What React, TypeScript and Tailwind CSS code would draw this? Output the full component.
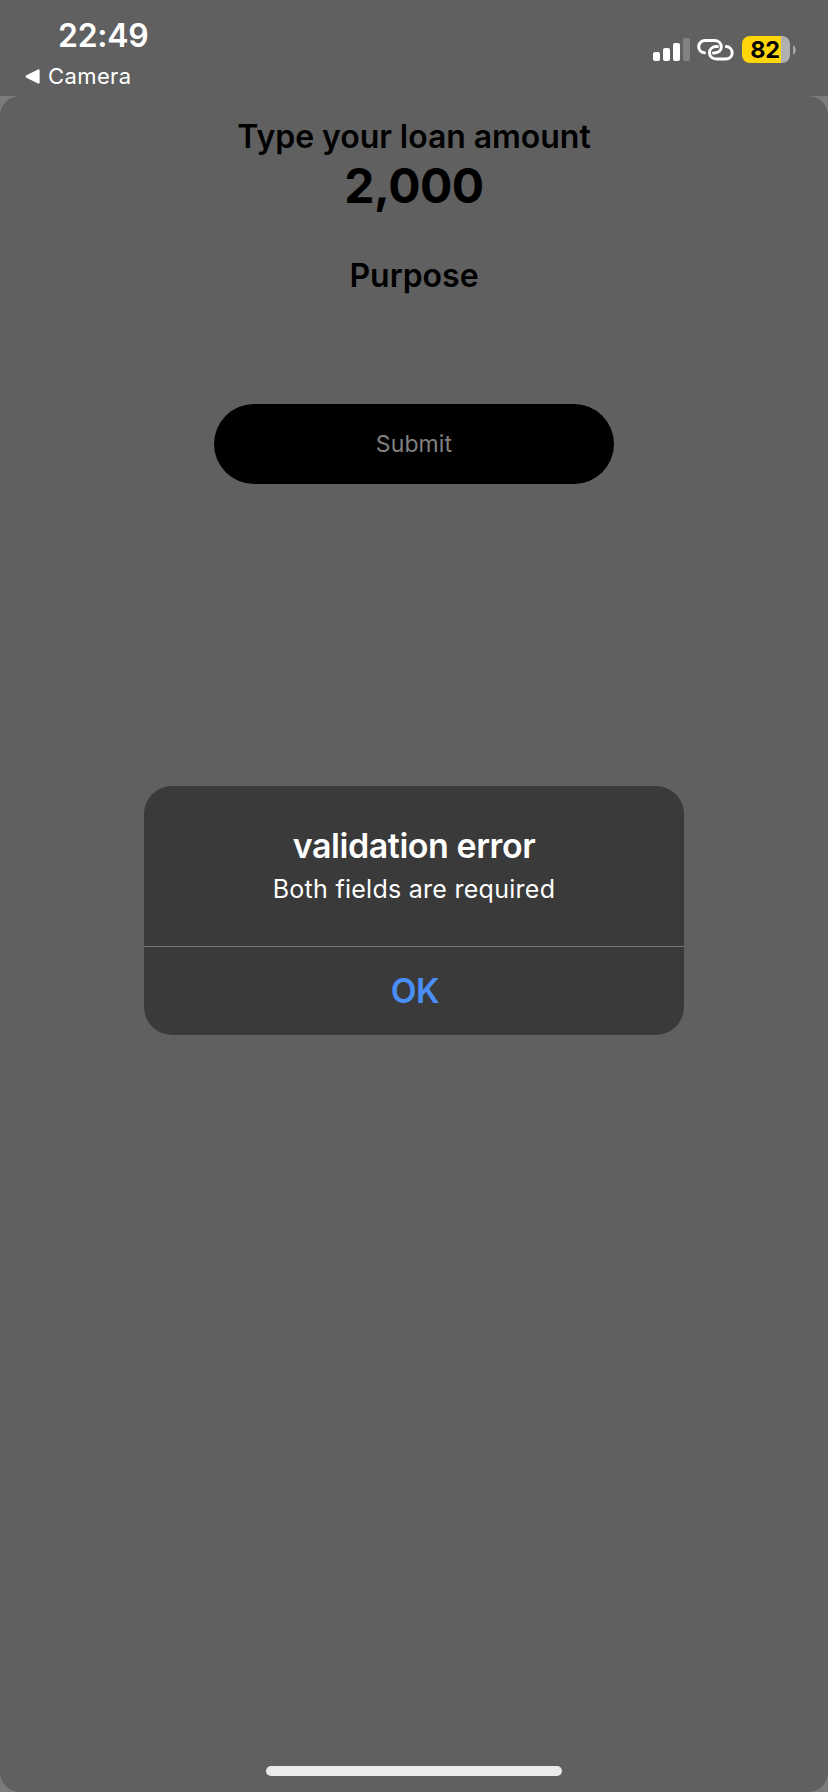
function SignalIcon() {
  return (
    <svg className="mt-[18px] h-[24px] w-[38px]" viewBox="0 0 38 24" fill="#fff">
      <rect x="0" y="14" width="7" height="9" rx="2" />
      <rect x="10" y="10" width="7" height="13" rx="2" />
      <rect x="20" y="5" width="7" height="18" rx="2" />
      <rect x="30" y="0" width="7" height="23" rx="2" fill="#828282" />
    </svg>
  );
}

function LinkIcon() {
  return (
    <svg
      className="mt-[18px] ml-[6px] h-[24px] w-[37px]"
      viewBox="0 0 37 24"
      fill="none"
      stroke="#fff"
      strokeWidth="3"
      strokeLinecap="round"
    >
      <path d="M7.4 14.8C4 14.4 1.7 11.9 1.7 8.8C1.7 5.1 4.4 2.6 8.2 2.6H17.4C21.4 2.6 24.3 5.1 24.3 8.8C24.3 12.3 21.4 14.9 17.4 14.9H16.4" />
      <path d="M29.4 8.6C32.8 9.1 35.2 11.6 35.2 14.7C35.2 18.4 32.4 21 28.6 21H19.4C15.4 21 12.5 18.4 12.5 14.7C12.5 11.2 15.4 8.6 19.4 8.6H20.4" />
    </svg>
  );
}

function Battery() {
  return (
    <div className="mt-[16px] ml-[8px] flex items-center">
      <div className="flex h-[27px] w-[48px] items-center justify-center rounded-[8px] bg-[linear-gradient(to_right,#ffd60a_39px,#b0b0b0_39px)] pr-[2px] text-[23.5px] leading-[27px] font-bold tracking-[-0.2px] text-black">
        82
      </div>
      <svg className="ml-[3px] h-[10px] w-[3px]" viewBox="0 0 3 10" fill="#a6a6a6">
        <path d="M0 0Q3 2 3 5T0 10Z" />
      </svg>
    </div>
  );
}

function StatusBar() {
  return (
    <header className="flex h-[96px] justify-between bg-[#606060] text-white">
      <div className="pt-[17px]">
        <div className="pl-[58px] text-[32px] leading-[37px] font-semibold tracking-[-0.3px]">22:49</div>
        <div className="flex items-center pt-[11px] pl-[25px] text-[22px] leading-[23px] tracking-[0.4px]">
          <svg className="mr-[8px] h-[15px] w-[15px]" viewBox="0 0 15 15" fill="#fff">
            <path d="M1 6.6L13 .4Q14.6 0 14.6 1.6V13.4Q14.6 15 13 14.5L1 8.4Q0 7.5 1 6.6Z" />
          </svg>
          Camera
        </div>
      </div>
      <div className="flex items-start pt-[20px] pr-[32px]">
        <div className="-mt-[20px] flex pt-[20px]">
          <SignalIcon />
          <LinkIcon />
        </div>
        <Battery />
      </div>
    </header>
  );
}

function Alert() {
  return (
    <div
      role="alertdialog"
      className="absolute top-[786px] left-[144px] flex h-[249px] w-[540px] flex-col overflow-hidden rounded-[28px] bg-[#3a3a3a] text-center text-white"
    >
      <div className="h-[160px] pt-[40px]">
        <h2 className="text-[34px] leading-[40px] font-semibold tracking-[-0.45px]">validation error</h2>
        <p className="pt-[7px] text-[25px] leading-[32px] tracking-[0.27px]">Both fields are required</p>
      </div>
      <button className="h-[89px] border-t border-[#777] pl-[2px] text-[33.5px] leading-[88px] font-semibold tracking-[-0.5px] text-[#4a8ef7]">
        OK
      </button>
    </div>
  );
}

export default function App() {
  return (
    <div className="relative flex h-[1792px] w-[828px] flex-col overflow-hidden bg-[#7b7b7b] font-['Inter',sans-serif]">
      <StatusBar />
      <main className="flex flex-1 flex-col items-center rounded-[20px] bg-[#606060] pt-[21px] text-black">
        <h1 className="text-[32px] leading-[40px] font-semibold tracking-[-0.05px]">Type your loan amount</h1>
        <div className="text-[48px] leading-[58px] font-bold tracking-[-0.5px]">2,000</div>
        <h2 className="mt-[41px] text-[32px] leading-[40px] font-semibold">Purpose</h2>
        <button className="mt-[108px] h-[80px] w-[400px] rounded-full bg-black text-[23px] tracking-[0.1px] text-[#808080]">
          Submit
        </button>
        <div className="mt-auto mb-[16px] h-[10px] w-[296px] rounded-full bg-[#ebebeb]" />
      </main>
      <Alert />
    </div>
  );
}
